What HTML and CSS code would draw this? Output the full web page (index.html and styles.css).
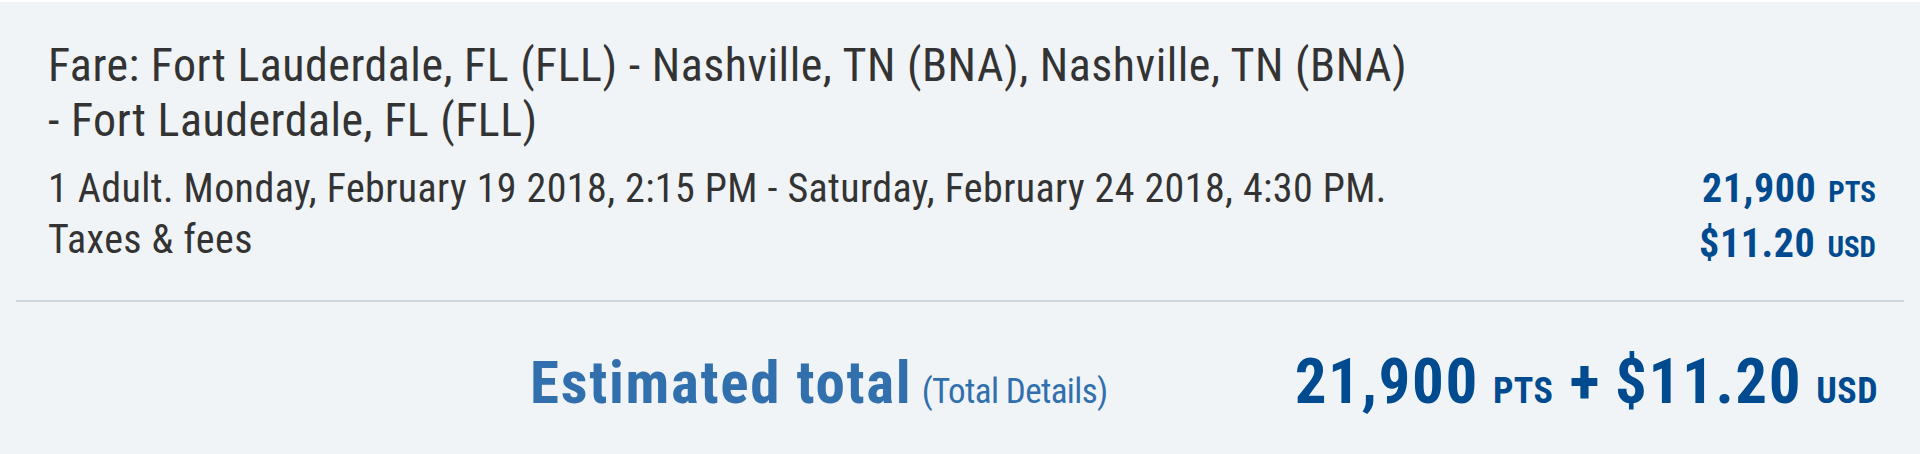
FILE: index.html
```html
<!DOCTYPE html>
<html lang="en">
<head>
  <meta charset="utf-8">
  <title>Trip summary</title>
  <link rel="stylesheet" href="styles.css">
</head>
<body>
  <div class="summary">
    <div class="fare">
      <h2 class="fare-title">Fare: Fort Lauderdale, FL (FLL) - Nashville, TN (BNA), Nashville, TN (BNA) - Fort Lauderdale, FL (FLL)</h2>
      <div class="fare-row">
        <div class="fare-info">
          <p>1 Adult. Monday, February 19 2018, 2:15 PM - Saturday, February 24 2018, 4:30 PM.</p>
          <p>Taxes &amp; fees</p>
        </div>
        <div class="fare-price">
          <p>21,900<small>PTS</small></p>
          <p>$11.20<small>USD</small></p>
        </div>
      </div>
    </div>

    <div class="total">
      <div class="total-label">
        Estimated total
        <a href="javascript: void 0;" class="total-details">(Total Details)</a>
      </div>
      <div class="total-price">
        21,900<small>PTS</small><span class="plus">+</span>$11.20<small>USD</small>
      </div>
    </div>
  </div>
</body>
</html>
```

FILE: styles.css
```css
html, body {
  padding: 0;
  margin: 0;
}
body {
  background-color: #fff;
  font-family: Roboto, "Liberation Sans", sans-serif;
  font-stretch: condensed;
  color: #333;
}
.summary {
  margin-top: 2px;
  height: 452px;
  background-color: #f0f4f7;
  box-sizing: border-box;
  padding: 36px 16px 0;
}
.fare {
  padding: 0 28px 27px 32px;
  border-bottom: 2px solid #cdd8e1;
}
.fare-title {
  max-width: 1372px;
  margin: 0 0 15px;
  font-size: 46px;
  line-height: 55px;
  font-weight: 400;
  letter-spacing: 0.5px;
}
.fare-row {
  display: flex;
  justify-content: space-between;
}
.fare-row p {
  margin: 0;
  font-size: 40px;
  line-height: 51px;
}
.fare-info p {
  letter-spacing: 0.4px;
}
.fare-price {
  text-align: right;
  color: #004a8f;
  font-weight: 700;
  letter-spacing: 0.6px;
}
.fare-price small {
  margin-left: 12px;
  font-size: 29px;
  letter-spacing: 0;
}
.total {
  display: flex;
  justify-content: flex-end;
  align-items: baseline;
  padding: 46px 26px 0 0;
}
.total-label {
  margin-right: 187px;
  font-size: 59px;
  font-weight: 700;
  letter-spacing: 1.7px;
  color: #3170ad;
}
.total-details {
  margin-left: -6px;
  font-size: 35px;
  font-weight: 400;
  letter-spacing: -0.6px;
  color: #3170ad;
  text-decoration: none;
}
.total-price {
  font-size: 63px;
  line-height: 63px;
  font-weight: 700;
  letter-spacing: 1.6px;
  color: #004a8f;
}
.total-price small {
  margin: 0 16px 0 14px;
  font-size: 36px;
  letter-spacing: 0.5px;
}
.total-price small:last-child {
  margin-right: 0;
}
.plus {
  margin-right: 14px;
}
```
